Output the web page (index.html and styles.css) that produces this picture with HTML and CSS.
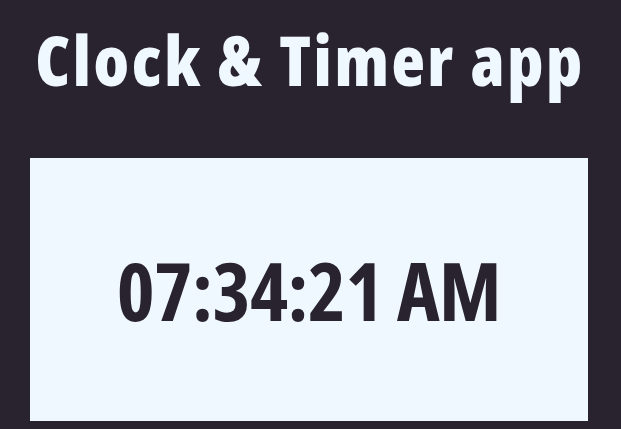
FILE: index.html
```html
<!DOCTYPE html>
<html>
<head>
<meta charset="utf-8">
<link rel="stylesheet" href="styles.css">
</head>
<body>
<div class="app">
  <h1 class="title">Clock &amp; Timer app</h1>
  <div class="card">
    <div class="time">07:34:21 AM</div>
  </div>
</div>
</body>
</html>
```
FILE: styles.css
```css
html, body {
  margin: 0;
  padding: 0;
  background: #29232f;
  height: 100%;
}
.app {
  display: flex;
  flex-direction: column;
  align-items: center;
  padding: 25px 3px 0 0;
  font-family: "Open Sans", sans-serif;
  font-stretch: 75%;
  font-weight: bold;
}
.title {
  margin: 0;
  padding-left: 2px;
  font-size: 69px;
  line-height: 1;
  letter-spacing: 2.6px;
  color: #eff7ff;
  font-weight: 800;
  white-space: nowrap;
}
.card {
  margin-top: 64px;
  width: 558px;
  height: 263px;
  background: #eff7ff;
  display: flex;
  align-items: center;
  justify-content: center;
}
.time {
  font-size: 81px;
  line-height: 1;
  letter-spacing: -0.5px;
  color: #29232f;
  white-space: nowrap;
}
```
